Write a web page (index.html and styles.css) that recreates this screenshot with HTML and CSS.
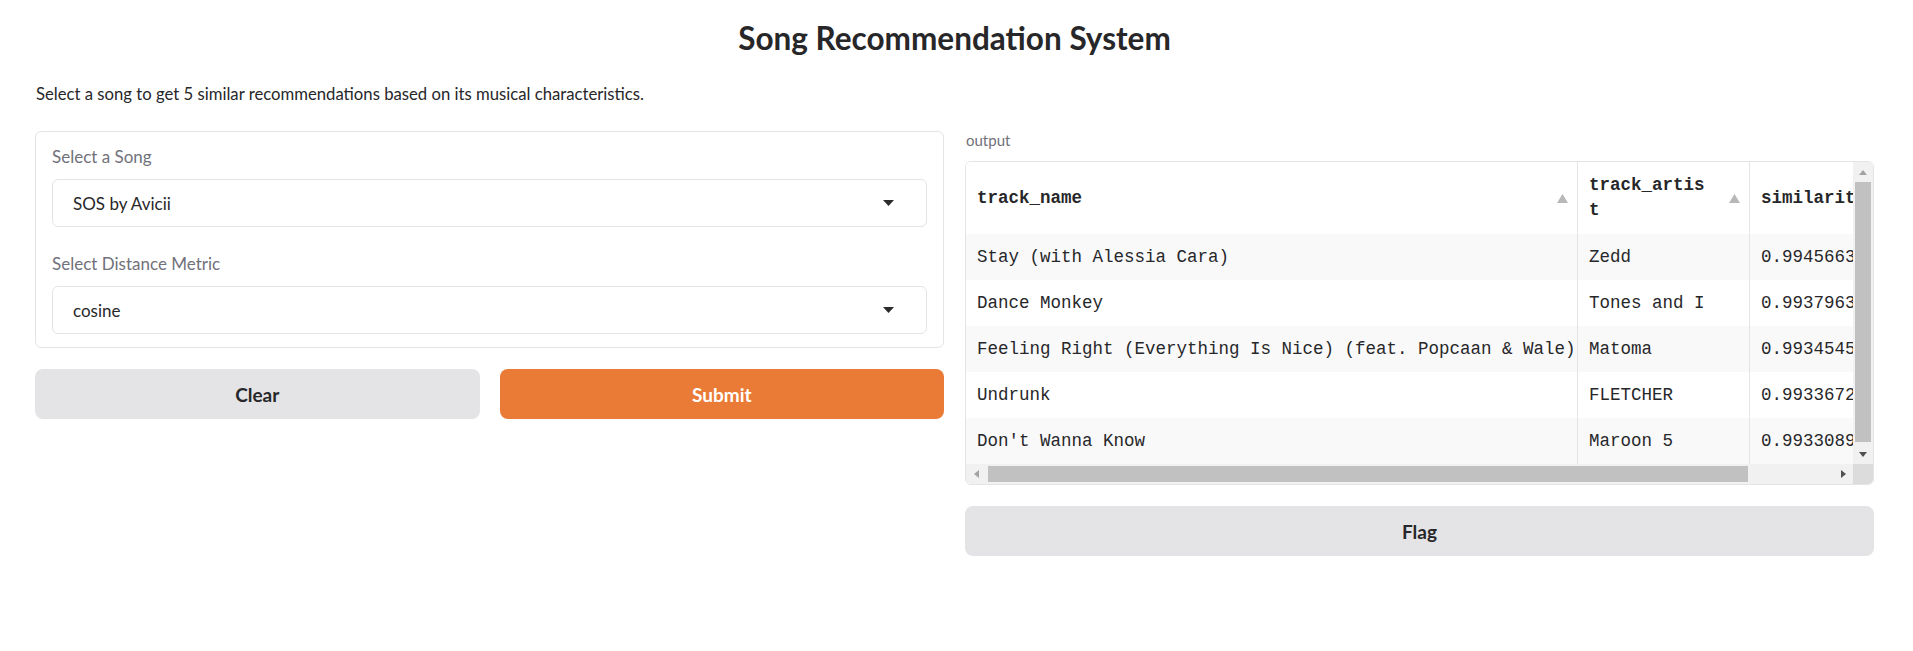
FILE: index.html
```html
<!DOCTYPE html>
<html lang="en">
<head>
<meta charset="utf-8">
<title>Song Recommendation System</title>
<link rel="stylesheet" href="styles.css">
</head>
<body>
<div class="app">
  <h1 class="title">Song Recommendation System</h1>
  <p class="desc">Select a song to get 5 similar recommendations based on its musical characteristics.</p>
  <div class="cols">
    <div class="col">
      <div class="panel">
        <div class="field">
          <span class="label">Select a Song</span>
          <div class="dropdown">
            <span class="value">SOS by Avicii</span>
            <svg class="caret" width="11" height="6" viewBox="0 0 11 6"><polygon points="0,0 11,0 5.5,6" fill="#2b2b2b"/></svg>
          </div>
        </div>
        <div class="field">
          <span class="label">Select Distance Metric</span>
          <div class="dropdown">
            <span class="value">cosine</span>
            <svg class="caret" width="11" height="6" viewBox="0 0 11 6"><polygon points="0,0 11,0 5.5,6" fill="#2b2b2b"/></svg>
          </div>
        </div>
      </div>
      <div class="btn-row">
        <button class="btn secondary">Clear</button>
        <button class="btn primary">Submit</button>
      </div>
    </div>
    <div class="col">
      <span class="out-label">output</span>
      <div class="df">
        <div class="df-main">
          <div class="df-view">
            <table class="grid">
              <colgroup><col class="c1"><col class="c2"><col class="c3"></colgroup>
              <thead>
                <tr>
                  <th><div class="th"><span class="th-name">track_name</span><svg class="sort" width="11" height="9" viewBox="0 0 11 9"><polygon points="5.5,0 11,9 0,9" fill="#b8b8b8"/></svg></div></th>
                  <th><div class="th"><span class="th-name">track_artist</span><svg class="sort" width="11" height="9" viewBox="0 0 11 9"><polygon points="5.5,0 11,9 0,9" fill="#b8b8b8"/></svg></div></th>
                  <th><div class="th"><span class="th-name">similarity</span><svg class="sort" width="11" height="9" viewBox="0 0 11 9"><polygon points="5.5,0 11,9 0,9" fill="#b8b8b8"/></svg></div></th>
                </tr>
              </thead>
              <tbody>
                <tr class="odd"><td>Stay (with Alessia Cara)</td><td>Zedd</td><td>0.99456632</td></tr>
                <tr><td>Dance Monkey</td><td>Tones and I</td><td>0.99379631</td></tr>
                <tr class="odd"><td>Feeling Right (Everything Is Nice) (feat. Popcaan &amp; Wale)</td><td>Matoma</td><td>0.99345451</td></tr>
                <tr><td>Undrunk</td><td>FLETCHER</td><td>0.99336722</td></tr>
                <tr class="odd"><td>Don't Wanna Know</td><td>Maroon 5</td><td>0.99330891</td></tr>
              </tbody>
            </table>
          </div>
          <div class="vscroll">
            <div class="sb-btn"><svg width="8" height="5" viewBox="0 0 8 5"><polygon points="4,0 8,5 0,5" fill="#a3a3a3"/></svg></div>
            <div class="vthumb"></div>
            <div class="sb-btn"><svg width="8" height="5" viewBox="0 0 8 5"><polygon points="0,0 8,0 4,5" fill="#505050"/></svg></div>
          </div>
        </div>
        <div class="hrow">
          <div class="hscroll">
            <div class="sb-btn h"><svg width="5" height="8" viewBox="0 0 5 8"><polygon points="5,0 5,8 0,4" fill="#a3a3a3"/></svg></div>
            <div class="hthumb"></div>
            <div class="hspace"></div>
            <div class="sb-btn h"><svg width="5" height="8" viewBox="0 0 5 8"><polygon points="0,0 5,4 0,8" fill="#505050"/></svg></div>
          </div>
          <div class="corner"></div>
        </div>
      </div>
      <button class="btn secondary flag">Flag</button>
    </div>
  </div>
</div>
</body>
</html>
```

FILE: styles.css
```css
* { box-sizing: border-box; }

body {
  margin: 0;
  background: #ffffff;
  font-family: "Lato", "Open Sans", sans-serif;
  color: #27272a;
}

.app {
  width: 1839px;
  margin-left: 35px;
}

.title {
  margin: 19px 0 0;
  font-size: 31.5px;
  font-weight: 700;
  line-height: normal;
  text-align: center;
  color: #27272a;
}

.desc {
  margin: 27px 0 0 1px;
  font-size: 16.7px;
  line-height: normal;
}

.cols {
  display: flex;
  gap: 21px;
  margin-top: 27px;
  align-items: flex-start;
}

.col {
  flex: 1 1 0;
  display: flex;
  flex-direction: column;
  min-width: 0;
}

.panel {
  border: 1px solid #e4e4e7;
  border-radius: 6px;
  padding: 13px 16px;
  display: flex;
  flex-direction: column;
  gap: 25px;
}

.field {
  display: flex;
  flex-direction: column;
  gap: 11px;
}

.label {
  font-size: 17px;
  line-height: 23px;
  color: #71717a;
}

.dropdown {
  height: 48px;
  border: 1px solid #e4e4e7;
  border-radius: 6px;
  padding: 0 32px 0 20px;
  display: flex;
  align-items: center;
  justify-content: space-between;
  font-size: 17px;
  color: #27272a;
}

.caret { flex: none; }

.btn-row {
  display: flex;
  gap: 20px;
  margin-top: 21px;
}

.btn {
  flex: 1 1 0;
  height: 50px;
  border: none;
  border-radius: 8px;
  font-family: inherit;
  font-size: 19px;
  font-weight: 700;
  cursor: pointer;
}

.secondary {
  background: #e4e4e7;
  color: #27272a;
}

.primary {
  background: #e97b36;
  color: #ffffff;
}

.flag {
  flex: none;
  margin-top: 21px;
}

.out-label {
  display: block;
  margin-left: 1px;
  font-size: 15px;
  line-height: 18px;
  color: #71717a;
  margin-bottom: 12px;
}

.df {
  border: 1px solid #e4e4e7;
  border-radius: 6px;
  overflow: hidden;
}

.df-main {
  display: flex;
  height: 302px;
}

.df-view {
  flex: 1 1 0;
  overflow: hidden;
}

.grid {
  border-spacing: 0;
  table-layout: fixed;
  width: 1004px;
  font-family: "Liberation Mono", "DejaVu Sans Mono", monospace;
  font-size: 17.5px;
  color: #27272a;
}

.c1 { width: 612px; }
.c2 { width: 172px; }
.c3 { width: 220px; }

.grid thead tr { height: 72px; }
.grid tbody tr { height: 46px; }

.grid th,
.grid td {
  border-right: 1px solid #e4e4e7;
  line-height: 25px;
  text-align: left;
  vertical-align: middle;
}

.grid th {
  padding: 0 9px 0 11px;
  font-weight: 700;
  background: #ffffff;
}

.grid td {
  padding: 0 11px;
  white-space: nowrap;
  overflow: hidden;
}

.grid tbody tr { background: #ffffff; }
.grid tbody tr.odd { background: #f9f9f9; }

.th {
  display: flex;
  align-items: center;
}

.th-name {
  flex: 1 1 0;
  word-break: break-all;
}

.sort {
  flex: none;
  margin-left: 16px;
}

.vscroll {
  width: 20px;
  flex: none;
  background: #f1f1f1;
  display: flex;
  flex-direction: column;
}

.sb-btn {
  flex: none;
  width: 20px;
  height: 20px;
  display: flex;
  align-items: center;
  justify-content: center;
}

.vthumb {
  flex: 1 1 0;
  margin: 0 2px 2px;
  background: #c1c1c1;
}

.hrow {
  display: flex;
  height: 20px;
}

.hscroll {
  flex: 1 1 0;
  display: flex;
  background: #f1f1f1;
}

.hthumb {
  width: 760px;
  margin: 2px 0 2px 2px;
  background: #c1c1c1;
}

.hspace { flex: 1 1 0; }

.corner {
  width: 20px;
  flex: none;
  background: #dcdcdc;
}
```
